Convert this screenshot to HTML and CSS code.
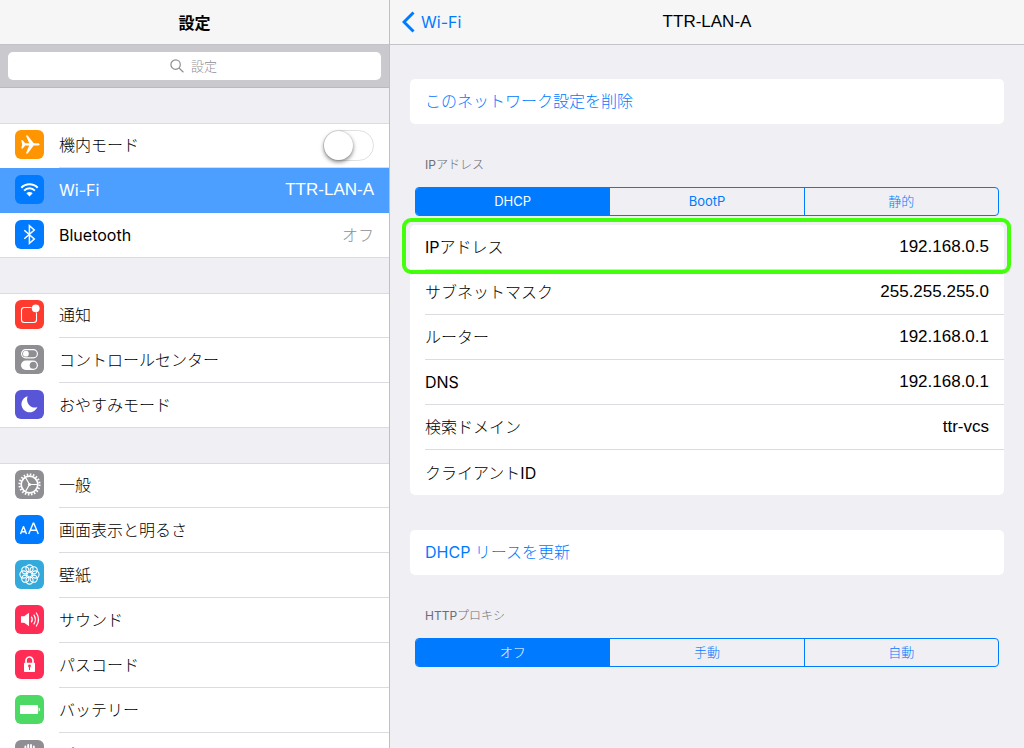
FILE: index.html
```html
<!DOCTYPE html>
<html lang="ja">
<head>
<meta charset="utf-8">
<title>設定</title>
<link rel="stylesheet" href="styles.css">
</head>
<body>
<div class="app">
  <aside class="sidebar">
    <header class="bar"><h1 class="bar-title bar-title-strong">設定</h1></header>
    <div class="search">
      <label class="search-box">
        <svg class="search-icon" viewBox="0 0 14 14" aria-hidden="true"><circle cx="5.6" cy="5.6" r="4.7"/><path d="M9 9l4.4 4.2"/></svg>
        <input class="search-input" type="text" placeholder="設定" aria-label="設定">
      </label>
    </div>

    <nav class="menu">
      <div class="group">
        <div class="item">
          <svg class="icon orange" viewBox="0 0 29 29" aria-hidden="true"><path fill="#fff" d="M6.2 10.2h1.5l2.5 3h4L10.9 5.4h1.8l6 7.8h3.6c1.3 0 2.3.5 2.3 1.2s-1 1.200-2.300 1.200h-3.600l-6 7.900h-1.800l3.300-7.900h-4l-2.500 2.900H6.200l1-4.100z"/></svg>
          <label class="item-body" for="airplane"><span>機内モード</span><input class="switch" id="airplane" type="checkbox" role="switch"></label>
        </div>
        <a class="item selected" href="#wifi">
          <svg class="icon blue" viewBox="0 0 29 29" aria-hidden="true"><g fill="none" stroke="#fff" stroke-width="2"><path d="M6.300 12.700a11.600 11.600 0 0 1 16.400 0M9.100 15.600a7.600 7.600 0 0 1 10.800 0"/></g><path fill="#fff" d="M11.300 18.300a4.600 4.600 0 0 1 6.400 0l-3.200 3.300z"/></svg>
          <span class="item-body"><span>Wi-Fi</span><span class="item-value network">TTR-LAN-A</span></span>
        </a>
        <a class="item" href="#bluetooth">
          <svg class="icon blue" viewBox="0 0 29 29" aria-hidden="true"><path fill="none" stroke="#fff" stroke-width="1.500" d="M9.300 10.200l10 8.800-4.900 4.300V5.700l4.900 4.300-10 8.800"/></svg>
          <span class="item-body"><span>Bluetooth</span><span class="item-value">オフ</span></span>
        </a>
      </div>

      <div class="group">
        <a class="item" href="#notifications">
          <svg class="icon red" viewBox="0 0 29 29" aria-hidden="true"><path fill="none" stroke="#fff" stroke-width="1.100" d="M16.500 7.500H9.200a2.700 2.700 0 0 0-2.700 2.700v9.600a2.700 2.700 0 0 0 2.700 2.700h9.600a2.700 2.700 0 0 0 2.700-2.700v-7.300"/><circle cx="20.700" cy="8.300" r="3.900" fill="#fff"/></svg>
          <span class="item-body">通知</span>
        </a>
        <a class="item" href="#control-center">
          <svg class="icon gray" viewBox="0 0 29 29" aria-hidden="true"><rect x="6.600" y="4.600" width="15.800" height="8.200" rx="4.100" fill="none" stroke="#fff" stroke-width="1.200"/><circle cx="10.900" cy="8.700" r="2.900" fill="#fff"/><rect x="6" y="15.600" width="17" height="9.400" rx="4.700" fill="#fff"/><circle cx="18.200" cy="20.300" r="3.500" fill="#8e8e93"/></svg>
          <span class="item-body">コントロールセンター</span>
        </a>
        <a class="item" href="#do-not-disturb">
          <svg class="icon purple" viewBox="0 0 29 29" aria-hidden="true"><path fill="#fff" d="M12.600 6.200a8.200 8.200 0 1 0 9.800 10.700c-5.800 2.400-12.200-3.200-9.800-10.700z"/></svg>
          <span class="item-body">おやすみモード</span>
        </a>
      </div>

      <div class="group">
        <a class="item" href="#general">
          <svg class="icon gray" viewBox="0 0 29 29" aria-hidden="true"><g fill="none" stroke="#fff"><circle cx="14.500" cy="14.500" r="10" stroke-width="2.200" stroke-dasharray="1.570 1.570"/><circle cx="14.500" cy="14.500" r="8.300" stroke-width="1.700"/><path stroke-width="1.200" d="M14.500 14.500h8M14.500 14.500l-4-7M14.500 14.500l-4 7"/></g><circle cx="14.500" cy="14.500" r="1.500" fill="#fff"/></svg>
          <span class="item-body">一般</span>
        </a>
        <a class="item" href="#display">
          <svg class="icon blue" viewBox="0 0 29 29" aria-hidden="true"><g fill="none" stroke="#fff" stroke-width="1.400"><path d="M5.500 18.900l2.900-7.200h.2l2.900 7.200M6.500 16.700h4"/><path d="M13.700 18.900l4.500-10.700h.6l4.500 10.700M15.200 15.300h6.600"/></g></svg>
          <span class="item-body">画面表示と明るさ</span>
        </a>
        <a class="item" href="#wallpaper">
          <svg class="icon cyan" viewBox="0 0 29 29" aria-hidden="true"><g fill="none" stroke="#fff" stroke-width="1.100"><circle cx="20.500" cy="14.500" r="3.600"/><circle cx="18.700" cy="18.700" r="3.600"/><circle cx="14.500" cy="20.500" r="3.600"/><circle cx="10.300" cy="18.700" r="3.600"/><circle cx="8.500" cy="14.500" r="3.600"/><circle cx="10.300" cy="10.300" r="3.600"/><circle cx="14.500" cy="8.500" r="3.600"/><circle cx="18.700" cy="10.300" r="3.600"/></g></svg>
          <span class="item-body">壁紙</span>
        </a>
        <a class="item" href="#sounds">
          <svg class="icon pink" viewBox="0 0 29 29" aria-hidden="true"><path fill="#fff" d="M6 11.300h3.200l4.800-3.500v13.400l-4.800-3.500H6z"/><g fill="none" stroke="#fff" stroke-width="1.200"><path d="M16.300 11.700q2 2.800 0 5.600M18.700 9.600q3.400 4.900 0 9.800M21.100 7.500q4.800 7 0 14"/></g></svg>
          <span class="item-body">サウンド</span>
        </a>
        <a class="item" href="#passcode">
          <svg class="icon pink" viewBox="0 0 29 29" aria-hidden="true"><rect x="9" y="12.800" width="11" height="9.200" rx=".8" fill="#fff"/><path fill="none" stroke="#fff" stroke-width="1.700" d="M11 13v-2.500a3.500 3.500 0 0 1 7 0V13"/><circle cx="14.500" cy="16" r="1.400" fill="#ff2d55"/><path stroke="#ff2d55" stroke-width="1.100" d="M14.500 16v4"/></svg>
          <span class="item-body">パスコード</span>
        </a>
        <a class="item" href="#battery">
          <svg class="icon green" viewBox="0 0 29 29" aria-hidden="true"><rect x="5" y="10" width="18" height="9" rx=".8" fill="#fff"/><path fill="#fff" d="M23.600 12.500q1.500.3 1.500 2t-1.500 2z"/></svg>
          <span class="item-body">バッテリー</span>
        </a>
        <a class="item" href="#privacy">
          <svg class="icon gray" viewBox="0 0 29 29" aria-hidden="true"><g stroke="#fff" stroke-width="1.900" stroke-linecap="round"><path d="M10.400 6.500v9M13.200 5v9M16 5v9M18.800 6.500v9"/></g><path fill="#fff" d="M9.500 13h10.300v6q0 5-4.800 5-3 0-5-3l-4-5q1-1.800 3.500 1z"/></svg>
          <span class="item-body">プライバシー</span>
        </a>
      </div>
    </nav>
  </aside>

  <main class="detail">
    <header class="bar detail-bar">
      <a class="back" href="#wifi"><svg class="back-icon" viewBox="0 0 13 22" aria-hidden="true"><path d="M11.500 1.500L2 11l9.500 9.500"/></svg>Wi-Fi</a>
      <h2 class="bar-title network">TTR-LAN-A</h2>
    </header>
    <div class="content">
      <button class="card action" type="button">このネットワーク設定を削除</button>

      <fieldset class="section">
        <legend class="section-title">IPアドレス</legend>
        <div class="segments">
          <label class="segment"><input type="radio" name="ip" checked>DHCP</label>
          <label class="segment"><input type="radio" name="ip">BootP</label>
          <label class="segment"><input type="radio" name="ip">静的</label>
        </div>
      </fieldset>

      <dl class="card fields">
        <div class="field highlighted"><dt>IPアドレス</dt><dd>192.168.0.5</dd></div>
        <div class="field"><dt>サブネットマスク</dt><dd>255.255.255.0</dd></div>
        <div class="field"><dt>ルーター</dt><dd>192.168.0.1</dd></div>
        <div class="field"><dt>DNS</dt><dd>192.168.0.1</dd></div>
        <div class="field"><dt>検索ドメイン</dt><dd>ttr-vcs</dd></div>
        <div class="field"><dt>クライアントID</dt><dd></dd></div>
      </dl>

      <button class="card action" type="button">DHCP リースを更新</button>

      <fieldset class="section">
        <legend class="section-title">HTTPプロキシ</legend>
        <div class="segments">
          <label class="segment"><input type="radio" name="proxy" checked>オフ</label>
          <label class="segment"><input type="radio" name="proxy">手動</label>
          <label class="segment"><input type="radio" name="proxy">自動</label>
        </div>
      </fieldset>
    </div>
  </main>
</div>
</body>
</html>
```

FILE: styles.css
```css
* { box-sizing: border-box; }

body {
  margin: 0;
  background: #efeff4;
  color: #000;
  font: 16px/24px Inter, "Noto Sans CJK JP Light", "Noto Sans CJK JP", sans-serif;
}

a { color: inherit; text-decoration: none; }

.app {
  display: flex;
  height: 100vh;
  overflow: hidden;
}

.sidebar {
  flex: 0 0 390px;
  overflow: hidden;
  border-right: 1px solid #bfbfc4;
}

.detail { flex: 1; min-width: 0; }

/* Title bars */
.bar {
  display: flex;
  align-items: center;
  justify-content: center;
  height: 45px;
  border-bottom: 1px solid #c4c4c8;
  background: #f6f6f6;
}

.bar-title { margin: 0; font-size: 16px; font-weight: 500; }
.bar-title-strong { font-family: "Noto Sans CJK JP", sans-serif; font-weight: 700; }

.detail-bar {
  display: grid;
  grid-template-columns: 1fr auto 1fr;
  padding: 0 12px;
}

.back {
  display: flex;
  align-items: center;
  gap: 6px;
  color: #007aff;
}

.back-icon {
  width: 13px;
  height: 22px;
  fill: none;
  stroke: #007aff;
  stroke-width: 3;
}

.network, .field dd {
  font-family: "Liberation Sans", "Noto Sans CJK JP", sans-serif;
  font-size: 17px;
  font-weight: 400;
}

/* Search */
.search {
  padding: 7px 8px;
  border-bottom: 1px solid #b9b9be;
  background: #c9c9ce;
}

.search-box {
  display: flex;
  align-items: center;
  justify-content: center;
  gap: 7px;
  height: 28px;
  border-radius: 5px;
  background: #fff;
}

.search-icon {
  width: 14px;
  height: 14px;
  fill: none;
  stroke: #8e8e93;
  stroke-width: 1.2;
}

.search-input {
  width: 28px;
  padding: 0;
  border: 0;
  outline: 0;
  background: none;
  font: inherit;
  font-size: 13px;
  appearance: none;
}

.search-input::placeholder { color: #8e8e93; opacity: 1; }

/* Settings list */
.menu {
  display: flex;
  flex-direction: column;
  gap: 35px;
  padding-top: 35px;
}

.group {
  background: #fff;
  box-shadow: inset 0 1px #dcdce0;
}

.item {
  display: flex;
  align-items: flex-start;
  gap: 15px;
  padding-left: 15px;
}

.item-body {
  display: flex;
  flex: 1;
  align-items: center;
  justify-content: space-between;
  height: 45px;
  padding-right: 15px;
  border-bottom: 1px solid #dcdce0;
}

.item:last-child { border-bottom: 1px solid #dcdce0; }
.item:last-child .item-body { height: 44px; border-bottom: 0; }

.item-value { color: #8e8e93; }

.selected { background: #4c9fff; color: #fff; }
.selected .item-body { border-color: #4c9fff; }
.selected .item-value { color: #fff; }

.icon {
  width: 29px;
  height: 29px;
  margin-top: 7px;
  border-radius: 6px;
}

.orange { background: #ff9500; }
.blue { background: #007aff; }
.red { background: #ff3b30; }
.gray { background: #8e8e93; }
.purple { background: #5856d6; }
.cyan { background: #34aadc; }
.pink { background: #ff2d55; }
.green { background: #4cd964; }

.switch {
  display: flex;
  width: 51px;
  height: 31px;
  margin: 0;
  border: 1px solid #e0e0e0;
  border-radius: 16px;
  background: #fff;
  appearance: none;
}

.switch::before {
  width: 29px;
  height: 29px;
  border-radius: 50%;
  background: #fff;
  box-shadow: 0 0 1px #aaa, 0 2px 4px #00000080;
  content: "";
}

.switch:checked { justify-content: flex-end; background: #4cd964; }

/* Network details */
.content {
  display: flex;
  flex-direction: column;
  padding: 34px 20px;
}

.card {
  margin: 0;
  border: 0;
  border-radius: 5px;
  background: #fff;
}

.action {
  height: 45px;
  padding: 0 15px 2px;
  color: #007aff;
  font: inherit;
  text-align: left;
}

.section {
  margin: 31px 5px 9px;
  padding: 0;
  border: 0;
}

.section-title {
  margin-bottom: 12px;
  padding: 0 10px;
  color: #6d6d72;
  font-size: 12px;
  line-height: 20px;
}

.segments {
  display: flex;
  overflow: hidden;
  border: 1px solid #007aff;
  border-radius: 4px;
}

.segment {
  flex: 1;
  color: #007aff;
  font-size: 13px;
  line-height: 27px;
  text-align: center;
}

.segment + .segment { border-left: 1px solid #007aff; }
.segment input { position: absolute; opacity: 0; }
.segment:has(:checked) { background: #007aff; color: #fff; }

.fields { margin-bottom: 35px; }

.field {
  position: relative;
  display: flex;
  align-items: center;
  justify-content: space-between;
  height: 45px;
  margin-left: 15px;
  padding-right: 15px;
  border-bottom: 1px solid #dcdce0;
}

.field:last-child { border-bottom: 0; }
.field dd { margin: 0; }

.highlighted::after {
  position: absolute;
  inset: -7px -7px -5px -23px;
  border: 4px solid #42ff0a;
  border-radius: 9px;
  content: "";
}
```
